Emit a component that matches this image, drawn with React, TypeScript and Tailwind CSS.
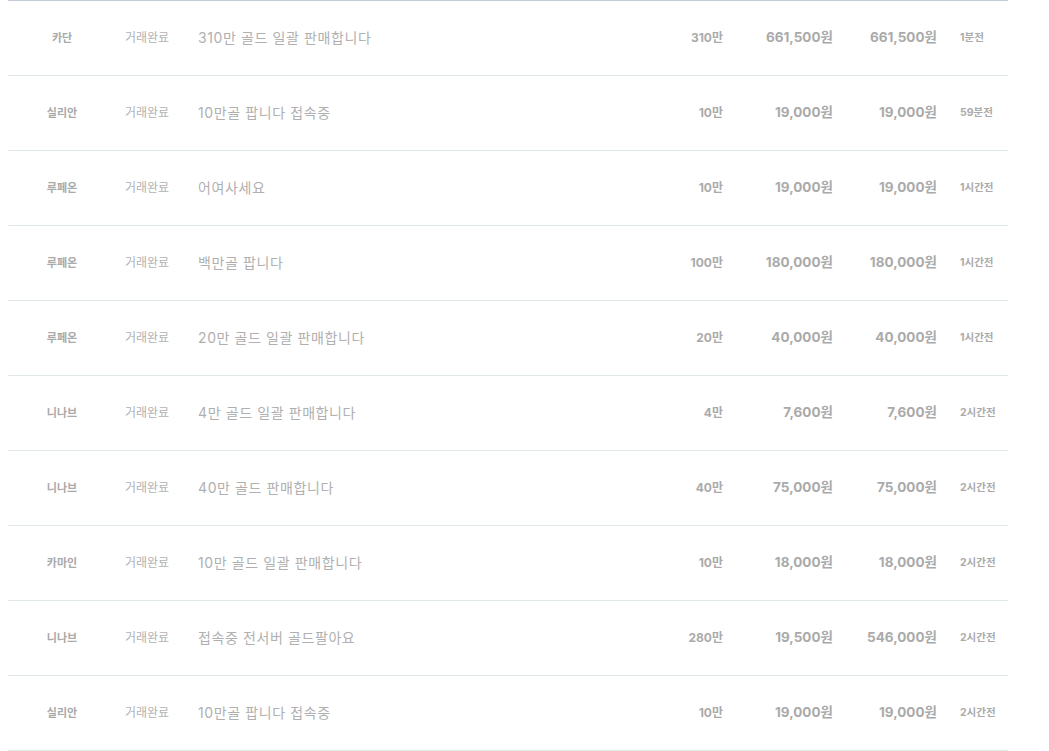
import React from "react";

const rows = [
  ["카단", "310만 골드 일괄 판매합니다", "310만", "661,500원", "661,500원", "1분전"],
  ["실리안", "10만골 팝니다 접속중", "10만", "19,000원", "19,000원", "59분전"],
  ["루페온", "어여사세요", "10만", "19,000원", "19,000원", "1시간전"],
  ["루페온", "백만골 팝니다", "100만", "180,000원", "180,000원", "1시간전"],
  ["루페온", "20만 골드 일괄 판매합니다", "20만", "40,000원", "40,000원", "1시간전"],
  ["니나브", "4만 골드 일괄 판매합니다", "4만", "7,600원", "7,600원", "2시간전"],
  ["니나브", "40만 골드 판매합니다", "40만", "75,000원", "75,000원", "2시간전"],
  ["카마인", "10만 골드 일괄 판매합니다", "10만", "18,000원", "18,000원", "2시간전"],
  ["니나브", "접속중 전서버 골드팔아요", "280만", "19,500원", "546,000원", "2시간전"],
  ["실리안", "10만골 팝니다 접속중", "10만", "19,000원", "19,000원", "2시간전"],
];

export default function App() {
  return (
    <div
      className="bg-white w-[1049px] h-[751px] overflow-hidden"
      style={{ fontFamily: '"Inter", "Noto Sans CJK KR", sans-serif' }}
    >
      <div className="ml-[8px] w-[1000px] border-t border-[#c3cbd9]">
        {rows.map((r, i) => (
          <div
            key={i}
            className="flex items-center h-[75px] border-b border-[#dfe7e7] text-[#aaaaaa] leading-none"
          >
            <div className="w-[108px] text-center text-[11px] font-bold">{r[0]}</div>
            <div className="w-[62px] text-center text-[12px] text-[#b2b2b2]">거래완료</div>
            <div className="ml-[20px] flex-1 text-[14px] tracking-[0.6px] text-[#b0b0b0]">
              {r[1]}
            </div>
            <div className="w-[81px] text-right text-[12px] font-bold">{r[2]}</div>
            <div className="w-[110px] text-right text-[13.5px] font-bold">{r[3]}</div>
            <div className="w-[104px] text-right text-[13.5px] font-bold">{r[4]}</div>
            <div className="w-[71px] pl-[23px] text-[10.5px] font-bold">{r[5]}</div>
          </div>
        ))}
      </div>
    </div>
  );
}
